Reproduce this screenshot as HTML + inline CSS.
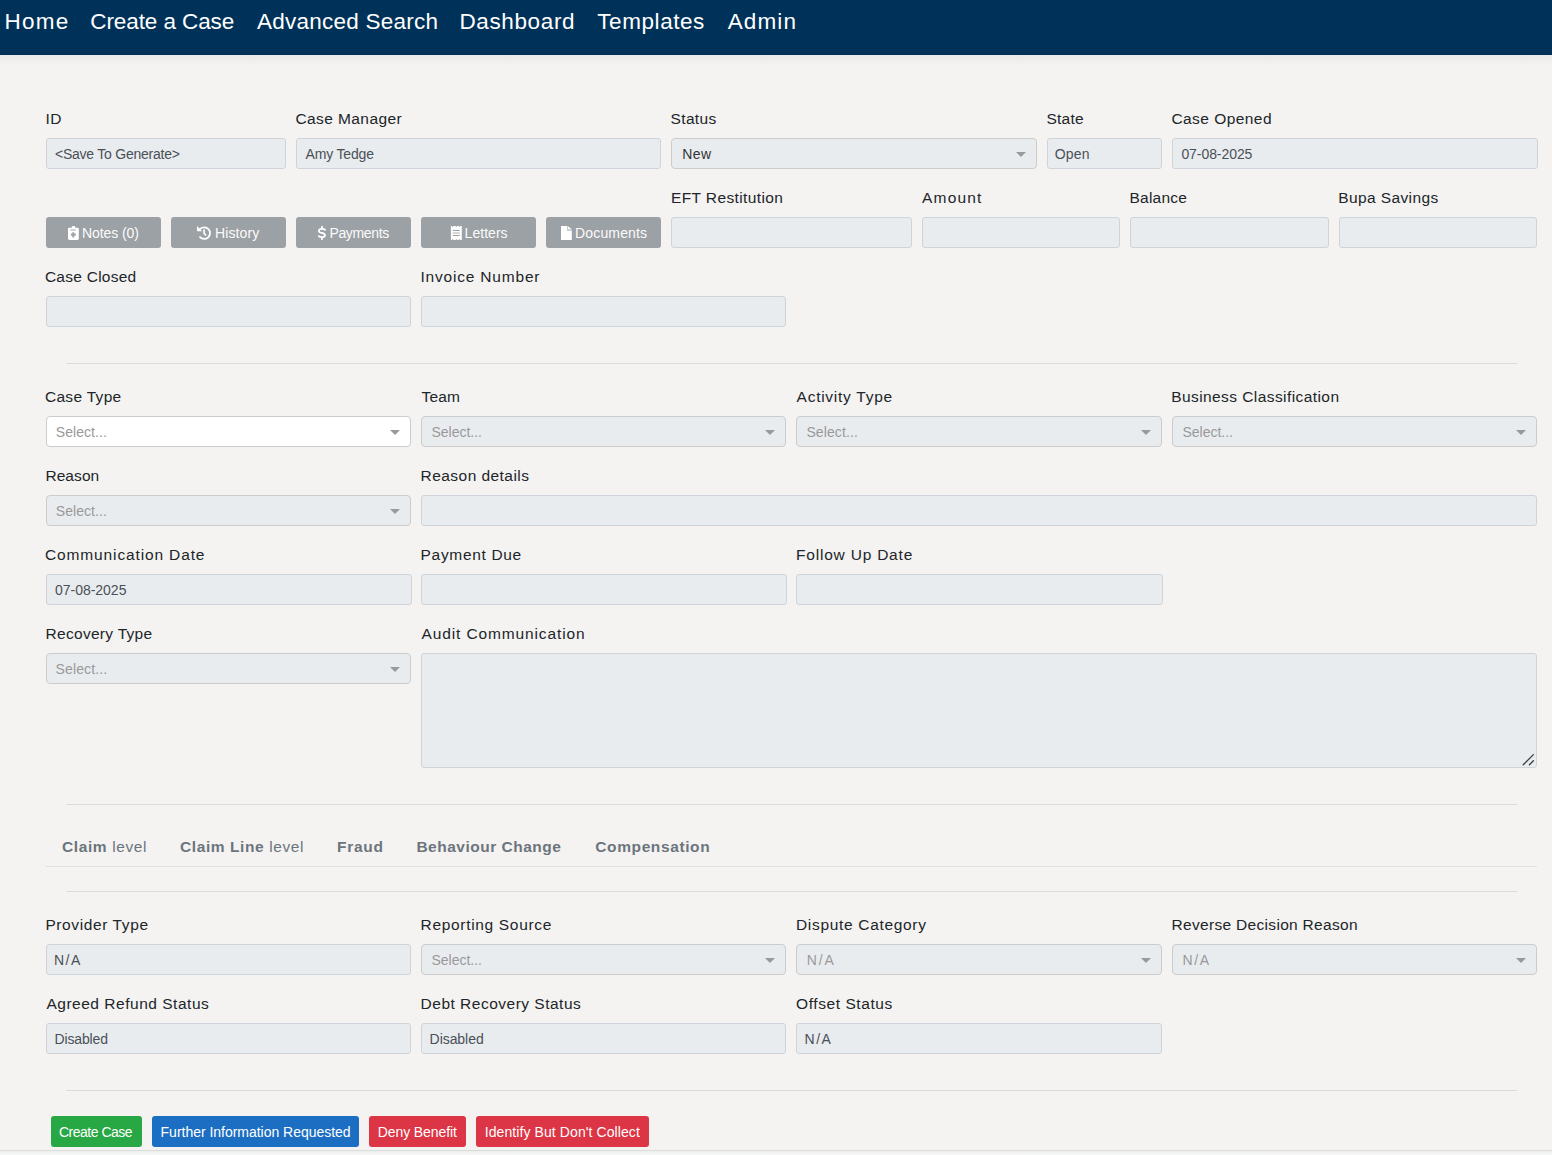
<!DOCTYPE html>
<html><head><meta charset="utf-8"><style>
html,body{margin:0;padding:0;width:1552px;height:1155px;overflow:hidden;background:#f4f3f1;}
.a{position:absolute;}
.t{position:absolute;white-space:pre;line-height:20px;font-family:'Liberation Sans', sans-serif;}
</style></head><body>
<div class="a" style="left:0;top:55px;width:1552px;height:10px;background:linear-gradient(#e9e8e6,#f4f3f1);"></div>
<div class="a" style="left:0px;top:0px;width:1552px;height:55px;background:#003259;"></div>
<div class="a" style="left:46px;top:138px;width:240px;height:31px;background:#e9ecef;border:1px solid #ced4da;box-sizing:border-box;border-radius:3px;"></div>
<div class="a" style="left:296px;top:138px;width:365px;height:31px;background:#e9ecef;border:1px solid #ced4da;box-sizing:border-box;border-radius:3px;"></div>
<div class="a" style="left:671px;top:138px;width:366px;height:31px;background:#e9ecef;border:1px solid #cccccc;box-sizing:border-box;border-radius:4px;"></div>
<div class="a" style="left:1016px;top:152px;width:0;height:0;border-left:5px solid transparent;border-right:5px solid transparent;border-top:5px solid #999;"></div>
<div class="a" style="left:1047px;top:138px;width:115px;height:31px;background:#e9ecef;border:1px solid #ced4da;box-sizing:border-box;border-radius:3px;"></div>
<div class="a" style="left:1172px;top:138px;width:366px;height:31px;background:#e9ecef;border:1px solid #ced4da;box-sizing:border-box;border-radius:3px;"></div>
<div class="a" style="left:46px;top:217px;width:115px;height:31px;background:#9ca1a5;border-radius:3px;"></div>
<div class="a" style="left:171px;top:217px;width:115px;height:31px;background:#9ca1a5;border-radius:3px;"></div>
<div class="a" style="left:296px;top:217px;width:115px;height:31px;background:#9ca1a5;border-radius:3px;"></div>
<div class="a" style="left:421px;top:217px;width:115px;height:31px;background:#9ca1a5;border-radius:3px;"></div>
<div class="a" style="left:546px;top:217px;width:115px;height:31px;background:#9ca1a5;border-radius:3px;"></div>
<div class="a" style="left:671px;top:217px;width:241px;height:31px;background:#e9ecef;border:1px solid #ced4da;box-sizing:border-box;border-radius:3px;"></div>
<div class="a" style="left:922px;top:217px;width:198px;height:31px;background:#e9ecef;border:1px solid #ced4da;box-sizing:border-box;border-radius:3px;"></div>
<div class="a" style="left:1130px;top:217px;width:199px;height:31px;background:#e9ecef;border:1px solid #ced4da;box-sizing:border-box;border-radius:3px;"></div>
<div class="a" style="left:1339px;top:217px;width:198px;height:31px;background:#e9ecef;border:1px solid #ced4da;box-sizing:border-box;border-radius:3px;"></div>
<div class="a" style="left:46px;top:296px;width:365px;height:31px;background:#e9ecef;border:1px solid #ced4da;box-sizing:border-box;border-radius:3px;"></div>
<div class="a" style="left:421px;top:296px;width:365px;height:31px;background:#e9ecef;border:1px solid #ced4da;box-sizing:border-box;border-radius:3px;"></div>
<div class="a" style="left:66px;top:363px;width:1451px;height:1px;background:#dcdbd9;"></div>
<div class="a" style="left:46px;top:416px;width:365px;height:31px;background:#ffffff;border:1px solid #cccccc;box-sizing:border-box;border-radius:4px;"></div>
<div class="a" style="left:390px;top:430px;width:0;height:0;border-left:5px solid transparent;border-right:5px solid transparent;border-top:5px solid #999;"></div>
<div class="a" style="left:421px;top:416px;width:365px;height:31px;background:#e9ecef;border:1px solid #cccccc;box-sizing:border-box;border-radius:4px;"></div>
<div class="a" style="left:765px;top:430px;width:0;height:0;border-left:5px solid transparent;border-right:5px solid transparent;border-top:5px solid #999;"></div>
<div class="a" style="left:796px;top:416px;width:366px;height:31px;background:#e9ecef;border:1px solid #cccccc;box-sizing:border-box;border-radius:4px;"></div>
<div class="a" style="left:1141px;top:430px;width:0;height:0;border-left:5px solid transparent;border-right:5px solid transparent;border-top:5px solid #999;"></div>
<div class="a" style="left:1172px;top:416px;width:365px;height:31px;background:#e9ecef;border:1px solid #cccccc;box-sizing:border-box;border-radius:4px;"></div>
<div class="a" style="left:1516px;top:430px;width:0;height:0;border-left:5px solid transparent;border-right:5px solid transparent;border-top:5px solid #999;"></div>
<div class="a" style="left:46px;top:495px;width:365px;height:31px;background:#e9ecef;border:1px solid #cccccc;box-sizing:border-box;border-radius:4px;"></div>
<div class="a" style="left:390px;top:509px;width:0;height:0;border-left:5px solid transparent;border-right:5px solid transparent;border-top:5px solid #999;"></div>
<div class="a" style="left:421px;top:495px;width:1116px;height:31px;background:#e9ecef;border:1px solid #ced4da;box-sizing:border-box;border-radius:3px;"></div>
<div class="a" style="left:46px;top:574px;width:366px;height:31px;background:#e9ecef;border:1px solid #ced4da;box-sizing:border-box;border-radius:3px;"></div>
<div class="a" style="left:421px;top:574px;width:366px;height:31px;background:#e9ecef;border:1px solid #ced4da;box-sizing:border-box;border-radius:3px;"></div>
<div class="a" style="left:796px;top:574px;width:367px;height:31px;background:#e9ecef;border:1px solid #ced4da;box-sizing:border-box;border-radius:3px;"></div>
<div class="a" style="left:46px;top:653px;width:365px;height:31px;background:#e9ecef;border:1px solid #cccccc;box-sizing:border-box;border-radius:4px;"></div>
<div class="a" style="left:390px;top:667px;width:0;height:0;border-left:5px solid transparent;border-right:5px solid transparent;border-top:5px solid #999;"></div>
<div class="a" style="left:421px;top:653px;width:1116px;height:115px;background:#e9ecef;border:1px solid #ced4da;box-sizing:border-box;border-radius:3px;"></div>
<div class="a" style="left:66px;top:804px;width:1451px;height:1px;background:#dcdbd9;"></div>
<div class="a" style="left:46px;top:866px;width:1491px;height:1px;background:#dee2e6;"></div>
<div class="a" style="left:66px;top:891px;width:1451px;height:1px;background:#dcdbd9;"></div>
<div class="a" style="left:46px;top:944px;width:365px;height:31px;background:#e9ecef;border:1px solid #ced4da;box-sizing:border-box;border-radius:3px;"></div>
<div class="a" style="left:421px;top:944px;width:365px;height:31px;background:#e9ecef;border:1px solid #cccccc;box-sizing:border-box;border-radius:4px;"></div>
<div class="a" style="left:765px;top:958px;width:0;height:0;border-left:5px solid transparent;border-right:5px solid transparent;border-top:5px solid #999;"></div>
<div class="a" style="left:796px;top:944px;width:366px;height:31px;background:#e9ecef;border:1px solid #cccccc;box-sizing:border-box;border-radius:4px;"></div>
<div class="a" style="left:1141px;top:958px;width:0;height:0;border-left:5px solid transparent;border-right:5px solid transparent;border-top:5px solid #999;"></div>
<div class="a" style="left:1172px;top:944px;width:365px;height:31px;background:#e9ecef;border:1px solid #cccccc;box-sizing:border-box;border-radius:4px;"></div>
<div class="a" style="left:1516px;top:958px;width:0;height:0;border-left:5px solid transparent;border-right:5px solid transparent;border-top:5px solid #999;"></div>
<div class="a" style="left:46px;top:1023px;width:365px;height:31px;background:#e9ecef;border:1px solid #ced4da;box-sizing:border-box;border-radius:3px;"></div>
<div class="a" style="left:421px;top:1023px;width:365px;height:31px;background:#e9ecef;border:1px solid #ced4da;box-sizing:border-box;border-radius:3px;"></div>
<div class="a" style="left:796px;top:1023px;width:366px;height:31px;background:#e9ecef;border:1px solid #ced4da;box-sizing:border-box;border-radius:3px;"></div>
<div class="a" style="left:66px;top:1090px;width:1451px;height:1px;background:#dcdbd9;"></div>
<div class="a" style="left:51px;top:1116px;width:91px;height:31px;background:#28a745;border-radius:3px;"></div>
<div class="a" style="left:152px;top:1116px;width:207px;height:31px;background:#1b6ec2;border-radius:3px;"></div>
<div class="a" style="left:369px;top:1116px;width:97px;height:31px;background:#dc3545;border-radius:3px;"></div>
<div class="a" style="left:476px;top:1116px;width:173px;height:31px;background:#dc3545;border-radius:3px;"></div>
<div class="a" style="left:0px;top:1150px;width:1552px;height:1px;background:#dcdcda;"></div>
<div class="a" style="left:0px;top:1151px;width:1552px;height:4px;background:#f0f1f1;background:linear-gradient(#eceeee,#f7f7f7);"></div>
<svg class="a" style="left:64px;top:222px" width="20" height="22" viewBox="0 0 20 22">
<rect x="4" y="5.7" width="10.8" height="12.2" rx="1.4" fill="#fff"/>
<rect x="7.8" y="4" width="3.4" height="3" rx="1.2" fill="#fff"/>
<rect x="6.3" y="7.2" width="5.5" height="1.6" fill="#c8c9ca"/>
<rect x="6.9" y="11.6" width="4.9" height="2" fill="#9ca1a5"/>
<rect x="8.3" y="10.3" width="2" height="5.1" fill="#9ca1a5"/>
</svg>
<svg class="a" style="left:194px;top:222px" width="20" height="22" viewBox="0 0 20 22">
<path d="M6.2,6.9 A5.8,5.8 0 1 1 6,15.1" fill="none" stroke="#fff" stroke-width="1.8" stroke-linecap="round"/>
<polygon points="3,4 3,9.3 8.2,9.3" fill="#fff"/>
<polyline points="10.1,8.2 10.1,11.4 11.6,12.9" fill="none" stroke="#fff" stroke-width="1.7" stroke-linecap="round" stroke-linejoin="round"/>
</svg>
<svg class="a" style="left:312px;top:222px" width="20" height="22" viewBox="0 0 20 22">
<path d="M13.1,7.9 C12.4,7 11.3,6.9 10,6.9 C8.1,6.9 6.9,7.6 6.9,8.9 C6.9,10.3 8.3,10.6 10,11 C11.8,11.4 13,11.9 13,13.3 C13,14.6 11.8,15.2 10,15.2 C8.5,15.2 7.5,14.9 6.8,14.2" fill="none" stroke="#fff" stroke-width="1.8" stroke-linecap="round"/>
<rect x="9.1" y="4" width="1.8" height="3.2" fill="#fff"/>
<rect x="9.1" y="14.8" width="1.8" height="3.1" fill="#fff"/>
</svg>
<svg class="a" style="left:446px;top:222px" width="20" height="22" viewBox="0 0 20 22">
<polygon points="4.9,4 5.8,4 6.7,5 7.6,4 9.4,4 10.3,5 11.2,4 12.6,4 13.5,5 14.4,4 15.8,4 15.8,17.9 14.4,17.9 13.5,16.9 12.6,17.9 11.2,17.9 10.3,16.9 9.4,17.9 7.6,17.9 6.7,16.9 5.8,17.9 4.9,17.9" fill="#fff"/>
<rect x="6.7" y="8" width="7.2" height="1" rx="0.5" fill="#9ca1a5"/>
<rect x="6.7" y="10.3" width="7.2" height="1.5" fill="#c8c9ca"/>
<rect x="6.7" y="13" width="7.2" height="1.1" rx="0.5" fill="#9ca1a5"/>
</svg>
<svg class="a" style="left:556px;top:222px" width="20" height="22" viewBox="0 0 20 22">
<polygon points="5,4 11,4 11,8.4 15.8,8.4 15.8,17.9 5,17.9" fill="#fff"/>
<polygon points="11,4 11.8,4 11.8,7.2 15.8,7.2 15.8,8.4 11,8.4" fill="#c8c9ca"/>
<polygon points="11.8,4 11.8,7.2 15.8,7.2" fill="#fff"/>
</svg>
<svg class="a" style="left:1518px;top:750px" width="20" height="20" viewBox="0 0 20 20">
<line x1="5.2" y1="14.8" x2="15.4" y2="4.6" stroke="#3a3d40" stroke-width="1.3" stroke-linecap="round"/>
<line x1="11.4" y1="14.8" x2="15.4" y2="10.8" stroke="#3a3d40" stroke-width="1.3" stroke-linecap="round"/>
</svg>

<div class="t" style="left:4.40px;top:12px;font-size:22.5px;font-weight:400;color:#ffffff;letter-spacing:1.300px;">Home</div>
<div class="t" style="left:90.30px;top:12px;font-size:22.5px;font-weight:400;color:#ffffff;letter-spacing:-0.092px;">Create a Case</div>
<div class="t" style="left:257.00px;top:12px;font-size:22.5px;font-weight:400;color:#ffffff;letter-spacing:0.236px;">Advanced Search</div>
<div class="t" style="left:459.40px;top:12px;font-size:22.5px;font-weight:400;color:#ffffff;letter-spacing:0.638px;">Dashboard</div>
<div class="t" style="left:597.30px;top:12px;font-size:22.5px;font-weight:400;color:#ffffff;letter-spacing:0.562px;">Templates</div>
<div class="t" style="left:727.70px;top:12px;font-size:22.5px;font-weight:400;color:#ffffff;letter-spacing:1.125px;">Admin</div>
<div class="t" style="left:45.40px;top:109px;font-size:15.5px;font-weight:400;color:#212529;letter-spacing:0.600px;">ID</div>
<div class="t" style="left:55.00px;top:144px;font-size:14px;font-weight:400;color:#495057;letter-spacing:-0.235px;">&lt;Save To Generate&gt;</div>
<div class="t" style="left:295.40px;top:109px;font-size:15.5px;font-weight:400;color:#212529;letter-spacing:0.418px;">Case Manager</div>
<div class="t" style="left:305.50px;top:144px;font-size:14px;font-weight:400;color:#495057;letter-spacing:-0.163px;">Amy Tedge</div>
<div class="t" style="left:670.60px;top:109px;font-size:15.5px;font-weight:400;color:#212529;letter-spacing:0.320px;">Status</div>
<div class="t" style="left:682.20px;top:144px;font-size:14px;font-weight:400;color:#333333;letter-spacing:0.400px;">New</div>
<div class="t" style="left:1046.40px;top:109px;font-size:15.5px;font-weight:400;color:#212529;letter-spacing:0.275px;">State</div>
<div class="t" style="left:1054.70px;top:144px;font-size:14px;font-weight:400;color:#495057;letter-spacing:0.167px;">Open</div>
<div class="t" style="left:1171.40px;top:109px;font-size:15.5px;font-weight:400;color:#212529;letter-spacing:0.450px;">Case Opened</div>
<div class="t" style="left:1181.40px;top:144px;font-size:14px;font-weight:400;color:#495057;letter-spacing:-0.067px;">07-08-2025</div>
<div class="t" style="left:82.00px;top:223px;font-size:14px;font-weight:400;color:#fbfbfb;letter-spacing:-0.075px;">Notes (0)</div>
<div class="t" style="left:215.10px;top:223px;font-size:14px;font-weight:400;color:#fbfbfb;letter-spacing:0.100px;">History</div>
<div class="t" style="left:329.40px;top:223px;font-size:14px;font-weight:400;color:#fbfbfb;letter-spacing:-0.343px;">Payments</div>
<div class="t" style="left:464.60px;top:223px;font-size:14px;font-weight:400;color:#fbfbfb;letter-spacing:0.033px;">Letters</div>
<div class="t" style="left:575.10px;top:223px;font-size:14px;font-weight:400;color:#fbfbfb;letter-spacing:0.138px;">Documents</div>
<div class="t" style="left:671.00px;top:188px;font-size:15.5px;font-weight:400;color:#212529;letter-spacing:0.386px;">EFT Restitution</div>
<div class="t" style="left:922.00px;top:188px;font-size:15.5px;font-weight:400;color:#212529;letter-spacing:1.200px;">Amount</div>
<div class="t" style="left:1129.50px;top:188px;font-size:15.5px;font-weight:400;color:#212529;letter-spacing:0.233px;">Balance</div>
<div class="t" style="left:1338.30px;top:188px;font-size:15.5px;font-weight:400;color:#212529;letter-spacing:0.382px;">Bupa Savings</div>
<div class="t" style="left:44.90px;top:267px;font-size:15.5px;font-weight:400;color:#212529;letter-spacing:0.260px;">Case Closed</div>
<div class="t" style="left:420.40px;top:267px;font-size:15.5px;font-weight:400;color:#212529;letter-spacing:0.815px;">Invoice Number</div>
<div class="t" style="left:44.90px;top:387px;font-size:15.5px;font-weight:400;color:#212529;letter-spacing:0.312px;">Case Type</div>
<div class="t" style="left:55.80px;top:422px;font-size:14px;font-weight:400;color:#999999;letter-spacing:0.050px;">Select...</div>
<div class="t" style="left:421.60px;top:387px;font-size:15.5px;font-weight:400;color:#212529;letter-spacing:0.133px;">Team</div>
<div class="t" style="left:431.40px;top:422px;font-size:14px;font-weight:400;color:#999999;">Select...</div>
<div class="t" style="left:796.60px;top:387px;font-size:15.5px;font-weight:400;color:#212529;letter-spacing:0.733px;">Activity Type</div>
<div class="t" style="left:806.40px;top:422px;font-size:14px;font-weight:400;color:#999999;letter-spacing:0.100px;">Select...</div>
<div class="t" style="left:1171.20px;top:387px;font-size:15.5px;font-weight:400;color:#212529;letter-spacing:0.423px;">Business Classification</div>
<div class="t" style="left:1182.40px;top:422px;font-size:14px;font-weight:400;color:#999999;">Select...</div>
<div class="t" style="left:45.40px;top:466px;font-size:15.5px;font-weight:400;color:#212529;letter-spacing:0.080px;">Reason</div>
<div class="t" style="left:55.80px;top:501px;font-size:14px;font-weight:400;color:#999999;letter-spacing:0.050px;">Select...</div>
<div class="t" style="left:420.60px;top:466px;font-size:15.5px;font-weight:400;color:#212529;letter-spacing:0.446px;">Reason details</div>
<div class="t" style="left:45.00px;top:545px;font-size:15.5px;font-weight:400;color:#212529;letter-spacing:0.865px;">Communication Date</div>
<div class="t" style="left:55.00px;top:580px;font-size:14px;font-weight:400;color:#495057;letter-spacing:-0.022px;">07-08-2025</div>
<div class="t" style="left:420.60px;top:545px;font-size:15.5px;font-weight:400;color:#212529;letter-spacing:0.670px;">Payment Due</div>
<div class="t" style="left:796.00px;top:545px;font-size:15.5px;font-weight:400;color:#212529;letter-spacing:0.792px;">Follow Up Date</div>
<div class="t" style="left:45.60px;top:624px;font-size:15.5px;font-weight:400;color:#212529;letter-spacing:0.283px;">Recovery Type</div>
<div class="t" style="left:55.60px;top:659px;font-size:14px;font-weight:400;color:#999999;letter-spacing:0.112px;">Select...</div>
<div class="t" style="left:421.50px;top:624px;font-size:15.5px;font-weight:400;color:#212529;letter-spacing:0.878px;">Audit Communication</div>
<div class="t" style="left:62.00px;top:837px;font-size:15.5px;font-weight:400;color:#6c757d;letter-spacing:0.600px;"><b>Claim</b> level</div>
<div class="t" style="left:180.00px;top:837px;font-size:15.5px;font-weight:400;color:#6c757d;letter-spacing:0.587px;"><b>Claim Line</b> level</div>
<div class="t" style="left:337.00px;top:837px;font-size:15.5px;font-weight:400;color:#6c757d;letter-spacing:0.750px;"><b>Fraud</b></div>
<div class="t" style="left:416.40px;top:837px;font-size:15.5px;font-weight:400;color:#6c757d;letter-spacing:0.507px;"><b>Behaviour Change</b></div>
<div class="t" style="left:595.30px;top:837px;font-size:15.5px;font-weight:400;color:#6c757d;letter-spacing:0.609px;"><b>Compensation</b></div>
<div class="t" style="left:45.40px;top:915px;font-size:15.5px;font-weight:400;color:#212529;letter-spacing:0.608px;">Provider Type</div>
<div class="t" style="left:54.00px;top:950px;font-size:14px;font-weight:400;color:#495057;letter-spacing:1.500px;">N/A</div>
<div class="t" style="left:420.60px;top:915px;font-size:15.5px;font-weight:400;color:#212529;letter-spacing:0.673px;">Reporting Source</div>
<div class="t" style="left:431.40px;top:950px;font-size:14px;font-weight:400;color:#999999;">Select...</div>
<div class="t" style="left:796.00px;top:915px;font-size:15.5px;font-weight:400;color:#212529;letter-spacing:0.680px;">Dispute Category</div>
<div class="t" style="left:806.70px;top:950px;font-size:14px;font-weight:400;color:#999999;letter-spacing:1.900px;">N/A</div>
<div class="t" style="left:1171.60px;top:915px;font-size:15.5px;font-weight:400;color:#212529;letter-spacing:0.309px;">Reverse Decision Reason</div>
<div class="t" style="left:1182.40px;top:950px;font-size:14px;font-weight:400;color:#999999;letter-spacing:1.650px;">N/A</div>
<div class="t" style="left:46.40px;top:994px;font-size:15.5px;font-weight:400;color:#212529;letter-spacing:0.521px;">Agreed Refund Status</div>
<div class="t" style="left:54.50px;top:1029px;font-size:14px;font-weight:400;color:#495057;letter-spacing:-0.143px;">Disabled</div>
<div class="t" style="left:420.60px;top:994px;font-size:15.5px;font-weight:400;color:#212529;letter-spacing:0.495px;">Debt Recovery Status</div>
<div class="t" style="left:429.60px;top:1029px;font-size:14px;font-weight:400;color:#495057;letter-spacing:-0.057px;">Disabled</div>
<div class="t" style="left:796.00px;top:994px;font-size:15.5px;font-weight:400;color:#212529;letter-spacing:0.583px;">Offset Status</div>
<div class="t" style="left:804.60px;top:1029px;font-size:14px;font-weight:400;color:#495057;letter-spacing:1.500px;">N/A</div>
<div class="t" style="left:59.00px;top:1122px;font-size:14px;font-weight:400;color:#ffffff;letter-spacing:-0.500px;">Create Case</div>
<div class="t" style="left:160.60px;top:1122px;font-size:14px;font-weight:400;color:#ffffff;letter-spacing:-0.021px;">Further Information Requested</div>
<div class="t" style="left:377.80px;top:1122px;font-size:14px;font-weight:400;color:#ffffff;letter-spacing:-0.100px;">Deny Benefit</div>
<div class="t" style="left:484.70px;top:1122px;font-size:14px;font-weight:400;color:#ffffff;letter-spacing:0.092px;">Identify But Don't Collect</div>
</body></html>
